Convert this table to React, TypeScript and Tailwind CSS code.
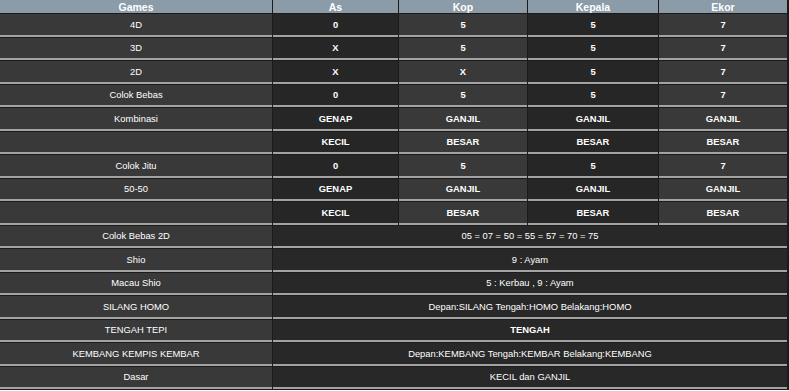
const cols = ["Games", "As", "Kop", "Kepala", "Ekor"];

const rows: string[][] = [
  ["4D", "0", "5", "5", "7"],
  ["3D", "X", "5", "5", "7"],
  ["2D", "X", "X", "5", "7"],
  ["Colok Bebas", "0", "5", "5", "7"],
  ["Kombinasi", "GENAP", "GANJIL", "GANJIL", "GANJIL"],
  ["", "KECIL", "BESAR", "BESAR", "BESAR"],
  ["Colok Jitu", "0", "5", "5", "7"],
  ["50-50", "GENAP", "GANJIL", "GANJIL", "GANJIL"],
  ["", "KECIL", "BESAR", "BESAR", "BESAR"],
];

const merged: [string, string, boolean?][] = [
  ["Colok Bebas 2D", "05 = 07 = 50 = 55 = 57 = 70 = 75"],
  ["Shio", "9 : Ayam"],
  ["Macau Shio", "5 : Kerbau , 9 : Ayam"],
  ["SILANG HOMO", "Depan:SILANG Tengah:HOMO Belakang:HOMO"],
  ["TENGAH TEPI", "TENGAH", true],
  ["KEMBANG KEMPIS KEMBAR", "Depan:KEMBANG Tengah:KEMBAR Belakang:KEMBANG"],
  ["Dasar", "KECIL dan GANJIL"],
];

const cellBg = ["bg-[#393939]", "bg-[#262626]", "bg-[#393939]", "bg-[#262626]", "bg-[#393939]"];

export default function App() {
  return (
    <div className="min-h-screen w-full bg-[#1b1b1b] text-white" style={{ fontFamily: '"Liberation Sans", Arial, sans-serif' }}>
      <table className="w-full table-fixed border-separate border-spacing-x-[1px] border-spacing-y-[1px] -mt-[1px] -ml-[1px] text-[9.4px]">
        <colgroup>
          <col className="w-[272px]" />
          <col className="w-[125px]" />
          <col className="w-[128px]" />
          <col className="w-[130px]" />
          <col />
        </colgroup>
        <thead>
          <tr>
            {cols.map((c) => (
              <th key={c} className="h-[13px] p-0 bg-[#8b9ba7] text-[10.5px] font-bold leading-[10px] text-center">
                {c}
              </th>
            ))}
          </tr>
        </thead>
        <tbody>
          {rows.map((r, i) => (
            <tr key={i}>
              {r.map((v, j) => (
                <td
                  key={j}
                  className={`h-[22.5px] p-0 text-center leading-none border-b-2 border-[#a3a3a3] ${cellBg[j]} ${j > 0 ? "font-bold" : ""}`}
                >
                  {v}
                </td>
              ))}
            </tr>
          ))}
          {merged.map(([g, v, bold]) => (
            <tr key={g}>
              <td className="h-[22.5px] p-0 text-center leading-none border-b-2 border-[#a3a3a3] bg-[#393939]">{g}</td>
              <td colSpan={4} className={`h-[22.5px] p-0 text-center leading-none border-b-2 border-[#a3a3a3] bg-[#282828] ${bold ? "font-bold" : ""}`}>
                {v}
              </td>
            </tr>
          ))}
        </tbody>
      </table>
    </div>
  );
}
